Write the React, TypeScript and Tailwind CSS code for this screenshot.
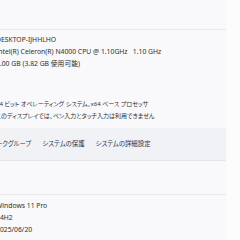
const font = { fontFamily: '"Noto Sans", "Noto Sans CJK JP", sans-serif' };

const Row = ({ children, jp = false }: { children: React.ReactNode; jp?: boolean }) => (
    <div className={`h-[12px] leading-[12px] whitespace-nowrap -ml-[4px] ${jp ? 'text-[6px] [font-feature-settings:"palt"]' : 'text-[6.8px]'}`}>
        {children}
    </div>
);

export default function App() {
    return (
        <div className="w-[240px] h-[240px] overflow-hidden bg-[#fdfcfc] text-[#2e2e2e]" style={font}>
            <div className="w-[226px] h-full bg-[#f9f9fb] flex flex-col">
                <div className="h-[30px] border-b border-[#e9e9ec]" />
                <div className="h-[98px] pt-[4px] flex flex-col">
                    <Row>DESKTOP-IJHHLHO</Row>
                    <Row>Intel(R) Celeron(R) N4000 CPU @ 1.10GHz&nbsp;&nbsp;&nbsp;1.10 GHz</Row>
                    <Row>4.00 GB (3.82 GB 使用可能)</Row>
                    <div className="h-[28px]" />
                    <Row jp>64 ビット オペレーティング システム、x64 ベース プロセッサ</Row>
                    <Row jp>このディスプレイでは、ペン入力とタッチ入力は利用できません</Row>
                </div>
                <div className="h-[33px] bg-[#f1f2f5] border-b border-[#e6e7ea] flex items-center gap-[11px] whitespace-nowrap text-[6.4px] [font-feature-settings:'palt'] text-[#1f3654] -ml-[50px]">
                    <span>ドメインまたはワークグループ</span>
                    <span>システムの保護</span>
                    <span>システムの詳細設定</span>
                </div>
                <div className="h-[34px] border-b border-[#e9e9ec]" />
                <div className="pt-[5px] flex flex-col">
                    <Row>Windows 11 Pro</Row>
                    <Row>24H2</Row>
                    <Row>2025/06/20</Row>
                </div>
            </div>
        </div>
    );
}
